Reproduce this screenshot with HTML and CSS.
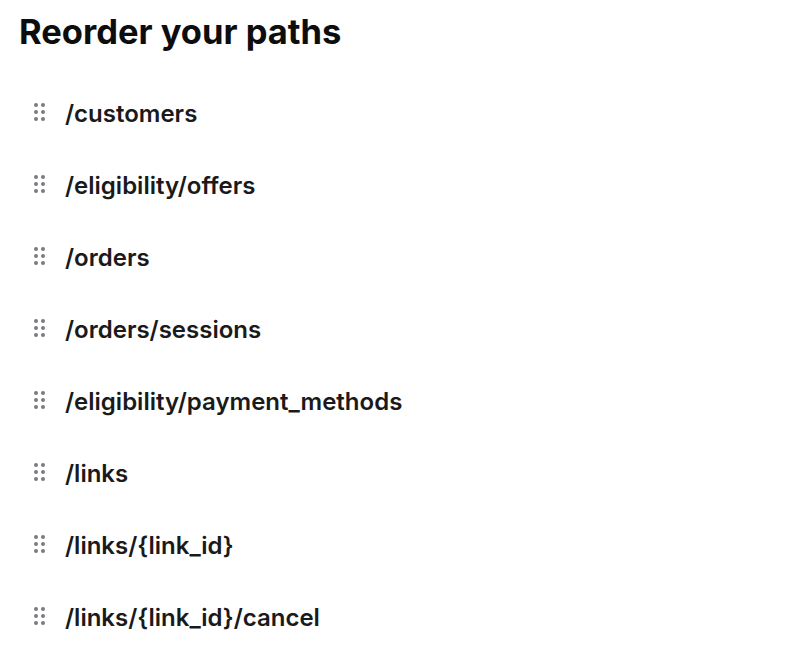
FILE: index.html
```html
<!DOCTYPE html>
<html>
<head>
<meta charset="utf-8">
<link rel="stylesheet" href="styles.css">
</head>
<body>
<main class="page">
  <h1 class="title">Reorder your paths</h1>
  <ul class="paths">
    <li class="path"><span class="grip"><i></i><i></i><i></i><i></i><i></i><i></i></span><span class="label">/customers</span></li>
    <li class="path"><span class="grip"><i></i><i></i><i></i><i></i><i></i><i></i></span><span class="label">/eligibility/offers</span></li>
    <li class="path"><span class="grip"><i></i><i></i><i></i><i></i><i></i><i></i></span><span class="label">/orders</span></li>
    <li class="path"><span class="grip"><i></i><i></i><i></i><i></i><i></i><i></i></span><span class="label">/orders/sessions</span></li>
    <li class="path"><span class="grip"><i></i><i></i><i></i><i></i><i></i><i></i></span><span class="label">/eligibility/payment_methods</span></li>
    <li class="path"><span class="grip"><i></i><i></i><i></i><i></i><i></i><i></i></span><span class="label">/links</span></li>
    <li class="path"><span class="grip"><i></i><i></i><i></i><i></i><i></i><i></i></span><span class="label">/links/{link_id}</span></li>
    <li class="path"><span class="grip"><i></i><i></i><i></i><i></i><i></i><i></i></span><span class="label">/links/{link_id}/cancel</span></li>
  </ul>
</main>
</body>
</html>
```
FILE: styles.css
```css
html, body {
  margin: 0;
  padding: 0;
  background: #ffffff;
}
body {
  font-family: Inter, "Noto Sans", sans-serif;
  color: #111111;
}
.page {
  padding: 10px 19px 0;
}
.title {
  margin: 0;
  font-size: 34.5px;
  font-weight: 700;
  line-height: 44px;
  color: #0d0d0d;
}
.paths {
  list-style: none;
  margin: 23px 0 0;
  padding: 0 0 0 15px;
}
.path {
  height: 72px;
  display: flex;
  align-items: center;
  gap: 20px;
}
.grip {
  display: grid;
  grid-template-columns: 4px 4px;
  grid-auto-rows: 4px;
  column-gap: 3px;
  row-gap: 3px;
  margin-top: -2px;
}
.grip i {
  display: block;
  width: 4px;
  height: 4px;
  border-radius: 50%;
  background: #7b7b80;
}
.label {
  font-size: 24px;
  font-weight: 600;
  color: #1a1a1a;
}
```
